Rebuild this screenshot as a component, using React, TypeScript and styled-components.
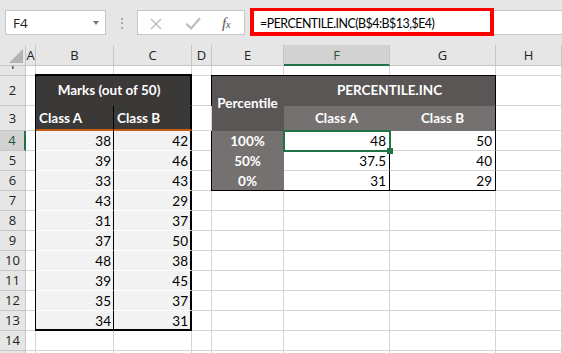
import React from 'react';
import styled, { createGlobalStyle, css } from 'styled-components';

const HEAD_BG = '#e6e6e6';
const HEAD_LINE = '#c6c6c6';
const GRID = '#d4d4d4';
const GREEN = '#217346';
const CELL_FONT = 'Lato, "Open Sans", sans-serif';
const UI_FONT = '"Open Sans", "Noto Sans", sans-serif';

const GlobalStyle = createGlobalStyle`
  html, body { margin: 0; padding: 0; background: #fff; }
  body { width: 562px; height: 353px; overflow: hidden; }
  #root { width: 562px; height: 353px; }
`;

const Page = styled.div`
  width: 562px;
  height: 353px;
  overflow: hidden;
  display: flex;
  flex-direction: column;
  background: #fff;
`;

const Toolbar = styled.div`
  flex: none;
  height: 45px;
  box-sizing: border-box;
  padding: 10px 0 0 5px;
  background: ${HEAD_BG};
  display: flex;
  align-items: flex-start;
  font-family: ${UI_FONT};
`;

const NameBox = styled.div`
  width: 101px;
  height: 25px;
  box-sizing: border-box;
  background: #fff;
  border: 1px solid ${HEAD_LINE};
  display: flex;
  align-items: center;
  justify-content: space-between;
  padding: 0 6px 0 7px;
  font-size: 13.5px;
  color: #222;
`;

const DropArrow = styled.span`
  width: 0;
  height: 0;
  border-left: 3.5px solid transparent;
  border-right: 3.5px solid transparent;
  border-top: 4px solid #777;
`;

const Grip = styled.div`
  display: flex;
  flex-direction: column;
  gap: 2.5px;
  margin: 7.5px 14px 0 15px;
`;

const GripDot = styled.span`
  display: block;
  width: 2px;
  height: 2px;
  background: #a9a9a9;
`;

const FxBox = styled.div`
  width: 108px;
  height: 25px;
  box-sizing: border-box;
  background: #fff;
  border: 1px solid ${HEAD_LINE};
  display: flex;
  align-items: center;
  padding: 2px 0 0 12px;
`;

const FxLabel = styled.span`
  margin-left: 21px;
  font-family: "Liberation Serif", "DejaVu Serif", serif;
  font-style: italic;
  font-size: 15px;
  color: #555;
  letter-spacing: -0.5px;
  small { font-size: 11px; }
`;

const FormulaInput = styled.div`
  position: relative;
  flex: 1;
  margin-left: 5px;
  height: 25px;
  box-sizing: border-box;
  background: #fff;
  border: 1px solid ${HEAD_LINE};
  border-right: none;
  display: flex;
  align-items: center;
  padding: 2px 0 0 9px;
  font-family: ${CELL_FONT};
  font-size: 12.4px;
  letter-spacing: -0.5px;
  color: #000;
  white-space: nowrap;
`;

const Highlight = styled.div`
  position: absolute;
  top: -3px;
  left: -1px;
  width: 244px;
  height: 28px;
  box-sizing: border-box;
  border: solid #ff0000;
  border-width: 3px 4px 4px 4px;
  pointer-events: none;
`;

const Sheet = styled.div`
  display: grid;
  grid-template-columns: 26px 10px 78px 78px 20px 72px 106px 106px 66px;
  grid-template-rows: 21px 10px 30px 25px repeat(12, 20px);
  font-family: ${CELL_FONT};
`;

const headBase = css`
  box-sizing: border-box;
  min-width: 0;
  display: flex;
  align-items: center;
  justify-content: center;
  font-family: ${UI_FONT};
  font-size: 13px;
  white-space: nowrap;
`;

const CornerCell = styled.div`
  ${headBase};
  background: ${HEAD_BG};
  border-right: 1px solid ${HEAD_LINE};
  border-bottom: 1px solid ${HEAD_LINE};
  align-items: flex-end;
  justify-content: flex-end;
  padding: 0 2px 2px 0;
`;

const CornerMark = styled.span`
  width: 0;
  height: 0;
  border-left: 14px solid transparent;
  border-bottom: 14px solid #b4b4b4;
`;

const ColHead = styled.div<{ $active?: boolean }>`
  ${headBase};
  background: ${p => (p.$active ? '#d2d2d2' : HEAD_BG)};
  color: ${p => (p.$active ? '#1c5a37' : '#222')};
  border-right: 1px solid ${HEAD_LINE};
  border-bottom: ${p => (p.$active ? `2px solid ${GREEN}` : `1px solid ${HEAD_LINE}`)};
`;

const RowHead = styled.div<{ $active?: boolean; $short?: boolean }>`
  ${headBase};
  overflow: hidden;
  align-items: ${p => (p.$short ? 'flex-start' : 'center')};
  background: ${p => (p.$active ? '#d2d2d2' : HEAD_BG)};
  color: ${p => (p.$active ? '#1c5a37' : '#222')};
  border-right: ${p => (p.$active ? `2px solid ${GREEN}` : `1px solid ${HEAD_LINE}`)};
  border-bottom: 1px solid ${HEAD_LINE};
  span {
    display: block;
    line-height: 17px;
    margin-top: ${p => (p.$short ? '-10px' : '0')};
  }
`;

const cellBase = css`
  box-sizing: border-box;
  min-width: 0;
  display: flex;
  align-items: flex-end;
  white-space: nowrap;
  overflow: hidden;
  font-size: 13.5px;
  line-height: 17px;
  color: #000;
  border-right: 1px solid ${GRID};
  border-bottom: 1px solid ${GRID};
`;

const Blank = styled.div`
  ${cellBase};
`;

const MarksTitle = styled.div`
  ${cellBase};
  grid-column: span 2;
  overflow: visible;
  align-items: center;
  justify-content: center;
  padding-right: 9px;
  background: #3b3838;
  color: #fff;
  font-weight: 700;
  border-right: 1px solid #000;
  border-bottom-color: #3b3838;
  box-shadow: -1px -2px 0 #000, 0 -2px 0 #000, -1px 0 0 #000, inset -1px 0 0 #000;
`;

const MarksSub = styled.div<{ $col: 'B' | 'C' }>`
  ${cellBase};
  overflow: visible;
  padding: 0 0 2px 3px;
  background: #3b3838;
  color: #fff;
  font-weight: 700;
  border-right: 1px solid #000;
  border-bottom: 2px solid #c55a11;
  box-shadow: ${p => (p.$col === 'B' ? '-1px 0 0 #000' : 'inset -1px 0 0 #000')};
`;

const MarksValue = styled.div<{ $col: 'B' | 'C'; $last?: boolean }>`
  ${cellBase};
  overflow: visible;
  justify-content: flex-end;
  padding-right: ${p => (p.$col === 'B' ? '2px' : '3px')};
  background: #f2f2f2;
  border-right: 1px solid #000;
  border-bottom: 1px solid ${p => (p.$last ? '#000' : '#fff')};
  box-shadow: ${p =>
    [
      p.$col === 'B' ? '-1px 0 0 #000' : 'inset -1px 0 0 #000',
      p.$last ? 'inset 0 -1px 0 #000' : '',
    ]
      .filter(Boolean)
      .join(', ')};
`;

const PctCorner = styled.div`
  ${cellBase};
  grid-row: span 2;
  align-items: center;
  justify-content: center;
  background: #5a5656;
  color: #fff;
  font-weight: 700;
  border-right-color: #5a5656;
  border-bottom-color: #5a5656;
  box-shadow: -1px -1px 0 #000, 0 -1px 0 #000, -1px 0 0 #000;
`;

const PctTitle = styled.div`
  ${cellBase};
  grid-column: span 2;
  align-items: center;
  justify-content: center;
  background: #5a5656;
  color: #fff;
  font-weight: 700;
  border-right-color: #000;
  border-bottom-color: #5a5656;
  box-shadow: 0 -1px 0 #000;
`;

const PctSub = styled.div<{ $last?: boolean }>`
  ${cellBase};
  align-items: center;
  justify-content: center;
  padding-top: 1px;
  background: #767171;
  color: #fff;
  font-weight: 700;
  border-right-color: ${p => (p.$last ? '#000' : '#767171')};
  border-bottom-color: #767171;
`;

const PctLabel = styled.div<{ $last?: boolean }>`
  ${cellBase};
  justify-content: center;
  background: #767171;
  color: #fff;
  font-weight: 700;
  border-right-color: #767171;
  border-bottom-color: ${p => (p.$last ? '#000' : '#767171')};
  box-shadow: -1px 0 0 #000;
`;

const PctValue = styled.div<{ $last?: boolean; $selected?: boolean }>`
  ${cellBase};
  justify-content: flex-end;
  padding-right: 3px;
  background: #fff;
  border-right-color: #000;
  border-bottom-color: ${p => (p.$last ? '#000' : GRID)};
  ${p =>
    p.$selected &&
    css`
      position: relative;
      overflow: visible;
    `}
`;

const SelectionFrame = styled.span`
  position: absolute;
  left: -1px;
  top: -1px;
  width: 108px;
  height: 22px;
  box-sizing: border-box;
  border: 2px solid ${GREEN};
  pointer-events: none;
`;

const FillHandle = styled.span`
  position: absolute;
  left: 103px;
  top: 17px;
  width: 6px;
  height: 6px;
  background: ${GREEN};
`;

const COLS = ['A', 'B', 'C', 'D', 'E', 'F', 'G', 'H'];
const ROWS = 15;

const marks: [number, number][] = [
  [38, 42],
  [39, 46],
  [33, 43],
  [43, 29],
  [31, 37],
  [37, 50],
  [48, 38],
  [39, 45],
  [35, 37],
  [34, 31],
];

const percentiles: [string, string, string][] = [
  ['100%', '48', '50'],
  ['50%', '37.5', '40'],
  ['0%', '31', '29'],
];

function buildSheet(): React.ReactNode[] {
  const cells: React.ReactNode[] = [];
  cells.push(
    <CornerCell key="corner">
      <CornerMark />
    </CornerCell>
  );
  COLS.forEach(c =>
    cells.push(
      <ColHead key={`h${c}`} $active={c === 'F'}>
        {c}
      </ColHead>
    )
  );
  for (let r = 1; r <= ROWS; r++) {
    cells.push(
      <RowHead key={`r${r}`} $active={r === 4} $short={r === 1}>
        <span>{r}</span>
      </RowHead>
    );
    cells.push(<Blank key={`A${r}`} />);

    if (r === 2) {
      cells.push(<MarksTitle key="B2">Marks (out of 50)</MarksTitle>);
    } else if (r === 3) {
      cells.push(
        <MarksSub key="B3" $col="B">
          Class A
        </MarksSub>,
        <MarksSub key="C3" $col="C">
          Class B
        </MarksSub>
      );
    } else if (r >= 4 && r <= 13) {
      const [a, b] = marks[r - 4];
      cells.push(
        <MarksValue key={`B${r}`} $col="B" $last={r === 13}>
          {a}
        </MarksValue>,
        <MarksValue key={`C${r}`} $col="C" $last={r === 13}>
          {b}
        </MarksValue>
      );
    } else {
      cells.push(<Blank key={`B${r}`} />, <Blank key={`C${r}`} />);
    }

    cells.push(<Blank key={`D${r}`} />);

    if (r === 2) {
      cells.push(
        <PctCorner key="E2">Percentile</PctCorner>,
        <PctTitle key="F2">PERCENTILE.INC</PctTitle>
      );
    } else if (r === 3) {
      cells.push(
        <PctSub key="F3">Class A</PctSub>,
        <PctSub key="G3" $last>
          Class B
        </PctSub>
      );
    } else if (r >= 4 && r <= 6) {
      const [label, a, b] = percentiles[r - 4];
      const last = r === 6;
      cells.push(
        <PctLabel key={`E${r}`} $last={last}>
          {label}
        </PctLabel>,
        <PctValue key={`F${r}`} $last={last} $selected={r === 4}>
          {a}
          {r === 4 && (
            <>
              <SelectionFrame />
              <FillHandle />
            </>
          )}
        </PctValue>,
        <PctValue key={`G${r}`} $last={last}>
          {b}
        </PctValue>
      );
    } else {
      cells.push(<Blank key={`E${r}`} />, <Blank key={`F${r}`} />, <Blank key={`G${r}`} />);
    }

    cells.push(<Blank key={`H${r}`} />);
  }
  return cells;
}

export default function App() {
  return (
    <>
      <GlobalStyle />
      <Page>
        <Toolbar>
          <NameBox>
            <span>F4</span>
            <DropArrow />
          </NameBox>
          <Grip>
            <GripDot />
            <GripDot />
            <GripDot />
          </Grip>
          <FxBox>
            <svg width="12" height="12" viewBox="0 0 12 12">
              <path d="M1 1 L11 11 M11 1 L1 11" stroke="#b8b8b8" strokeWidth="1.4" fill="none" />
            </svg>
            <svg width="16" height="13" viewBox="0 0 16 13" style={{ marginLeft: 23 }}>
              <path d="M1.2 6.8 L6 11.4 L15 1.2" stroke="#bcbcbc" strokeWidth="2.2" fill="none" />
            </svg>
            <FxLabel>
              f<small>x</small>
            </FxLabel>
          </FxBox>
          <FormulaInput>
            =PERCENTILE.INC(B$4:B$13,$E4)
            <Highlight />
          </FormulaInput>
        </Toolbar>
        <Sheet>{buildSheet()}</Sheet>
      </Page>
    </>
  );
}
